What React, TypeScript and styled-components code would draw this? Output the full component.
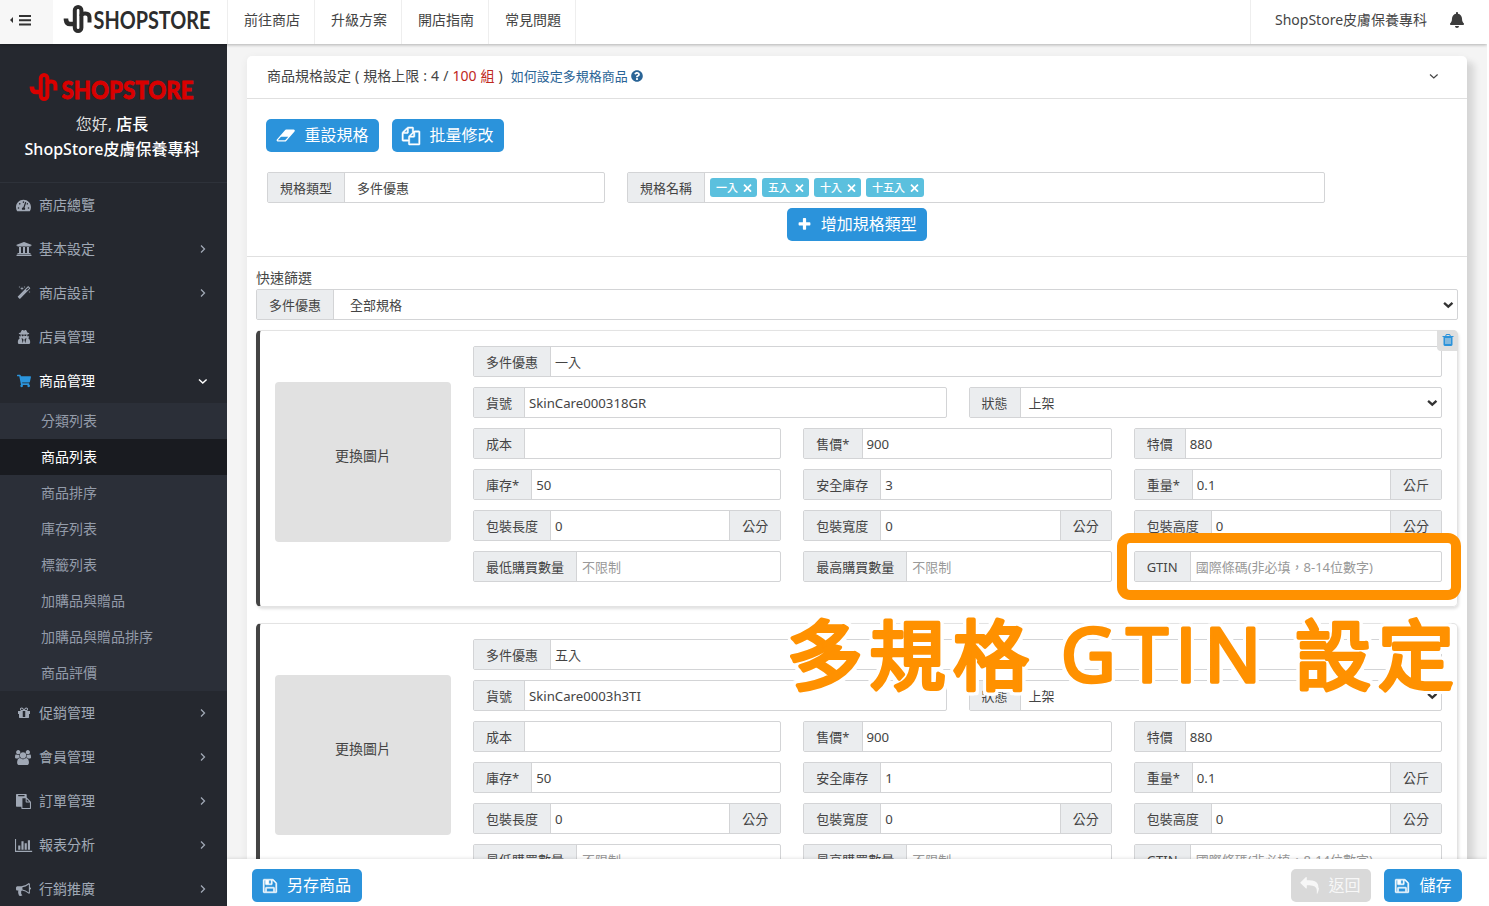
import React from "react";
import styled, { createGlobalStyle, css } from "styled-components";
import {
  FaTachometerAlt,
  FaUniversity,
  FaUserSecret,
  FaShoppingCart,
  FaQuestionCircle,
  FaBell,
} from "react-icons/fa";

const Global = createGlobalStyle`
  * { box-sizing: border-box; }
  html, body { margin: 0; background: #fff; overflow: hidden; }
  body {
    font-family: "Noto Sans", "Noto Sans CJK TC", sans-serif;
    font-size: 14px;
    line-height: 20px;
    color: #444;
  }
`;

/* ---------- glyphs ---------- */

const glyphs = {
  floppy: { w: 1792, bold: 50, d: "M512 1536h768v-384h-768v384zm896 0h128v-896q0-14-10-38.5t-20-34.5l-281-281q-10-10-34-20t-39-10v416q0 40-28 68t-68 28h-576q-40 0-68-28t-28-68v-416h-128v1280h128v-416q0-40 28-68t68-28h832q40 0 68 28t28 68v416zm-384-928v-320q0-13-9.5-22.5t-22.5-9.5h-192q-13 0-22.5 9.5t-9.5 22.5v320q0 13 9.5 22.5t22.5 9.5h192q13 0 22.5-9.5t9.5-22.5zm640 32v928q0 40-28 68t-68 28h-1344q-40 0-68-28t-28-68v-1344q0-40 28-68t68-28h928q40 0 88 20t76 48l280 280q28 28 48 76t20 88z" },
  files: { w: 1792, bold: 50, d: "M1696 384q40 0 68 28t28 68v1216q0 40-28 68t-68 28h-960q-40 0-68-28t-28-68v-288h-544q-40 0-68-28t-28-68v-672q0-40 20-88t48-76l408-408q28-28 76-48t88-20h416q40 0 68 28t28 68v328q68-40 128-40h416zm-544 213l-299 299h299v-299zm-640-384l-299 299h299v-299zm196 647l316-316v-416h-384v416q0 40-28 68t-68 28h-416v640h512v-256q0-40 20-88t48-76zm956 804v-1152h-384v416q0 40-28 68t-68 28h-416v640h896z" },
  paste: { w: 1792, bold: 0, d: "M768 1664h896v-640h-416q-40 0-68-28t-28-68v-416h-384v1152zm256-1440v-64q0-13-9.5-22.5t-22.5-9.5h-704q-13 0-22.5 9.5t-9.5 22.5v64q0 13 9.5 22.5t22.5 9.5h704q13 0 22.5-9.5t9.5-22.5zm256 672h299l-299-299v299zm512 128v672q0 40-28 68t-68 28h-960q-40 0-68-28t-28-68v-160h-544q-40 0-68-28t-28-68v-1344q0-40 28-68t68-28h1088q40 0 68 28t28 68v328q21 13 36 28l408 408q28 28 48 76t20 88z" },
  chart: { w: 2048, bold: 0, d: "M640 896v512h-256v-512h256zm384-512v1024h-256v-1024h256zm1024 1152v128h-2048v-1536h128v1408h1920zm-640-896v768h-256v-768h256zm384-384v1152h-256v-1152h256z" },
  trash: { w: 1792, bold: 0, d: "M704 1376v-704q0-14-9-23t-23-9h-64q-14 0-23 9t-9 23v704q0 14 9 23t23 9h64q14 0 23-9t9-23zm256 0v-704q0-14-9-23t-23-9h-64q-14 0-23 9t-9 23v704q0 14 9 23t23 9h64q14 0 23-9t9-23zm256 0v-704q0-14-9-23t-23-9h-64q-14 0-23 9t-9 23v704q0 14 9 23t23 9h64q14 0 23-9t9-23zm-544-992h448l-48-117q-7-9-17-11h-317q-10 2-17 11zm928 32v64q0 14-9 23t-23 9h-96v948q0 83-47 143.5t-113 60.5h-832q-66 0-113-58.5t-47-141.5v-952h-96q-14 0-23-9t-9-23v-64q0-14 9-23t23-9h309l70-167q15-37 54-63t79-26h320q40 0 79 26t54 63l70 167h309q14 0 23 9t9 23z" },
  eraser: { w: 2048, bold: 0, d: "M960 1408l336-384h-768l-336 384h768zm1013-1077q15 34 9.5 71.5t-30.5 65.5l-896 1024q-38 44-96 44h-768q-38 0-69.5-20.5t-47.5-54.5q-15-34-9.5-71.5t30.5-65.5l896-1024q38-44 96-44h768q38 0 69.5 20.5t47.5 54.5z" },
  reply: { w: 1792, bold: 0, d: "M1792 1120q0 166-127 451-3 7-10.5 24t-13.5 30-13 22q-12 17-28 17-15 0-23.5-10t-8.5-25q0-9 2.5-26.5t2.5-23.5q5-68 5-123 0-112-19.5-200.5t-54-153.5-89-112-117-79-145.5-48.5-165.5-24.5-184.5-7h-224v256q0 26-19 45t-45 19-45-19l-512-512q-19-19-19-45t19-45l512-512q19-19 45-19t45 19 19 45v256h224q713 0 875 403 53 134 53 333z" },
  bullhorn: { w: 1792, bold: 0, d: "M1664 640q53 0 90.5 37.5t37.5 90.5-37.5 90.5-90.5 37.5v384q0 52-38 90t-90 38q-417-347-812-380-58 19-91 66t-31 100.5 40 92.5q-20 33-23 65.5t6 58 33.5 55 48 50 61.5 50.5q-29 58-111.5 83t-168.5 11.5-132-55.5q-7-23-29.5-87.5t-32-94.5-23-89-15-101 3.5-98.5 22-110.5h-122q-66 0-113-47t-47-113v-192q0-66 47-113t113-47h480q435 0 896-384 52 0 90 38t38 90v384zm-128 604v-954q-394 302-768 343v270q377 42 768 341z" },
  magic: { w: 1792, bold: 0, d: "M1254 581l293-293-107-107-293 293zm447-293q0 27-18 45l-1286 1286q-18 18-45 18t-45-18l-198-198q-18-18-18-45t18-45l1286-1286q18-18 45-18t45 18l198 198q18 18 18 45zm-1351-190l98 30-98 30-30 98-30-98-98-30 98-30 30-98zm350 162l196 60-196 60-60 196-60-196-196-60 196-60 60-196zm930 478l98 30-98 30-30 98-30-98-98-30 98-30 30-98zm-640-640l98 30-98 30-30 98-30-98-98-30 98-30 30-98z" },
  gift: { w: 1792, bold: 0, d: "M1056 1356v-716h-320v716q0 25 18 38.5t46 13.5h192q28 0 46-13.5t18-38.5zm-456-844h195l-126-161q-26-31-69-31-40 0-68 28t-28 68 28 68 68 28zm688-96q0-40-28-68t-68-28q-43 0-69 31l-125 161h194q40 0 68-28t28-68zm376 256v320q0 14-9 23t-23 9h-96v416q0 40-28 68t-68 28h-1088q-40 0-68-28t-28-68v-416h-96q-14 0-23-9t-9-23v-320q0-14 9-23t23-9h440q-93 0-158.5-65.5t-65.5-158.5 65.5-158.5 158.5-65.5q107 0 168 77l128 165 128-165q61-77 168-77 93 0 158.5 65.5t65.5 158.5-65.5 158.5-158.5 65.5h440q14 0 23 9t9 23z" },
  users: { w: 1920, bold: 0, d: "M593 896q-162 5-265 128h-134q-82 0-138-40.5t-56-118.5q0-353 124-353 6 0 43.5 21t97.5 42.5 119 21.5q67 0 133-23-5 37-5 66 0 159 81 256zm1071 637q0 120-73 189.5t-194 69.5h-874q-121 0-194-69.5t-73-189.5q0-53 3.5-103.5t14-109 26.5-108.5 43-97.5 62-81 85.5-53.5 111.5-20q10 0 43 21.5t73 48 107 48 135 21.5 135-21.5 107-48 73-48 43-21.5q61 0 111.5 20t85.5 53.5 62 81 43 97.5 26.5 108.5 14 109 3.5 103.5zm-1024-1277q0 106-75 181t-181 75-181-75-75-181 75-181 181-75 181 75 75 181zm704 384q0 159-112.5 271.5t-271.5 112.5-271.5-112.5-112.5-271.5 112.5-271.5 271.5-112.5 271.5 112.5 112.5 271.5zm576 225q0 78-56 118.5t-138 40.5h-134q-103-123-265-128 81-97 81-256 0-29-5-66 66 23 133 23 59 0 119-21.5t97.5-42.5 43.5-21q124 0 124 353zm-128-609q0 106-75 181t-181 75-181-75-75-181 75-181 181-75 181 75 75 181z" },
  plus: { w: 1792, bold: 0, d: "M1600 736v192q0 40-28 68t-68 28h-416v416q0 40-28 68t-68 28h-192q-40 0-68-28t-28-68v-416h-416q-40 0-68-28t-28-68v-192q0-40 28-68t68-28h416v-416q0-40 28-68t68-28h192q40 0 68 28t28 68v416h416q40 0 68 28t28 68z" },
};

function Glyph({ name, size }: { name: keyof typeof glyphs; size: number }) {
  const g = glyphs[name];
  return (
    <svg
      width={(size * g.w) / 1792}
      height={size}
      viewBox={`0 0 ${g.w} 1792`}
      fill="currentColor"
      stroke={g.bold ? "currentColor" : "none"}
      strokeWidth={g.bold}
      overflow="visible"
    >
      <path d={g.d} />
    </svg>
  );
}

const arrowPaths = { right: "M3 1.5 6.5 5 3 8.5", down: "M1 3.5 4.8 7 8.6 3.5" };

function Arrow({ dir, size = 10, weight = 1.2 }: { dir: "right" | "down"; size?: number; weight?: number }) {
  return (
    <svg width={size} height={size} viewBox="0 0 10 10" fill="none" stroke="currentColor" strokeWidth={weight}>
      <path d={arrowPaths[dir]} />
    </svg>
  );
}

function Logo({ width, color, heavy }: { width: number; color: string; heavy?: boolean }) {
  return (
    <svg width={width} height={28} viewBox={`0 0 ${width} 28`} overflow="visible">
      <g fill="none" stroke={color} strokeWidth="4">
        <path d="M2 13.5v1.2q.5 4.3 4 4.3h4.5" strokeWidth="4.6" />
        <rect x="10.8" y="2" width="6.6" height="24" rx="3.3" />
        <path d="M17.5 11q0-2.6 3.4-2.6h.6q4 0 4 4.2v5" />
      </g>
      {heavy ? (
        <text x="31.5" y="25.6" fontFamily="Lato" fontWeight="900" fontSize="25" fill={color} stroke={color} strokeWidth=".8" textLength="132" lengthAdjust="spacingAndGlyphs">
          SHOPSTORE
        </text>
      ) : (
        <text x="29.5" y="24" fontFamily="Lato" fontWeight="700" fontSize="24.5" fill={color} textLength="117" lengthAdjust="spacingAndGlyphs">
          SHOPSTORE
        </text>
      )}
    </svg>
  );
}

/* ---------- shell ---------- */

const Page = styled.div`
  position: relative;
  width: 1487px;
  height: 906px;
  display: flex;
  flex-direction: column;
  overflow: hidden;
  background: #f4f4f4;
`;
const TopBar = styled.header`
  position: relative;
  z-index: 2;
  display: flex;
  flex: 0 0 44px;
  background: #fff;
  box-shadow: 0 1px 3px rgba(0, 0, 0, 0.28);
`;
const MenuToggle = styled.div`
  width: 53px;
  display: flex;
  align-items: center;
  padding: 0 0 4px 10px;
  background: #f7f7f7;
`;
const Brand = styled.div`
  width: 175px;
  padding: 5px 0 0 11px;
  border-right: 1px solid #eee;
`;
const TopLink = styled.div`
  width: 87px;
  padding: 10px 0 0 2px;
  text-align: center;
  border-right: 1px solid #eee;
`;
const Account = styled.div`
  margin-left: auto;
  width: 237px;
  display: flex;
  align-items: flex-start;
  gap: 22px;
  padding: 10px 0 0 24px;
  border-left: 1px solid #eee;
  svg { margin-top: 2px; color: #3c3c3c; }
`;
const Body = styled.div`
  display: flex;
  flex: 1;
  min-height: 0;
`;

/* ---------- side menu ---------- */

const SideBar = styled.aside`
  flex: 0 0 227px;
  background: #25282f;
  color: #a0a8b5;
  overflow: hidden;
`;
const Profile = styled.div`
  height: 139px;
  padding-top: 29px;
  border-bottom: 1px solid #2e323a;
  font-size: 16px;
  line-height: 25px;
  color: #ddd;
  svg { display: block; margin: 0 auto 11px 30px; }
  b { font-weight: 500; color: #fff; }
`;
const Greeting = styled.div`
  padding-right: 3px;
  text-align: center;
`;
const MenuRow = styled.div<{ $active?: boolean }>`
  height: 44px;
  display: flex;
  align-items: center;
  padding: 0 19px 0 15px;
  color: ${(p) => (p.$active ? "#fff" : "#a0a8b5")};
  span { flex: 1; }
`;
const MenuIcon = styled.i<{ $active?: boolean }>`
  width: 17px;
  margin-right: 7px;
  display: flex;
  justify-content: center;
  color: ${(p) => (p.$active ? "#2b95dd" : "inherit")};
`;
const SubMenu = styled.div`
  background: #2b2f38;
`;
const SubRow = styled.div<{ $active?: boolean }>`
  height: 36px;
  padding-left: 41px;
  line-height: 36px;
  color: ${(p) => (p.$active ? "#fff" : "#939ba9")};
  background: ${(p) => (p.$active ? "#191b20" : "transparent")};
`;

/* ---------- content ---------- */

const Main = styled.main`
  flex: 1;
  min-width: 0;
  display: flex;
  flex-direction: column;
`;
const Scroll = styled.div`
  flex: 1;
  min-height: 0;
  overflow: hidden;
  padding: 12px 20px 0;
`;
const Panel = styled.section`
  height: 900px;
  background: #fff;
  border-radius: 5px 5px 0 0;
  box-shadow: 8px 6px 6px rgba(0, 0, 0, 0.1), 0 2px 8px rgba(0, 0, 0, 0.06);
`;
const PanelHead = styled.div`
  height: 43px;
  display: flex;
  align-items: center;
  padding: 0 28px 2px 20px;
  border-bottom: 1px solid #e0e0e0;
  word-spacing: 0.4px;
`;
const Limit = styled.span`
  color: #c0281c;
`;
const HelpLink = styled.a`
  flex: 1;
  display: flex;
  align-items: center;
  gap: 3px;
  margin-left: 8px;
  font-size: 13px;
  color: #2a6496;
`;
const SpecArea = styled.div`
  height: 158px;
  padding: 20px 19px 0;
  border-bottom: 1px solid #e0e0e0;
`;
const ButtonRow = styled.div<{ $center?: boolean }>`
  display: flex;
  gap: ${(p) => (p.$center ? 0 : 13.5)}px;
  justify-content: ${(p) => (p.$center ? "center" : "flex-start")};
`;
const Button = styled.button<{ $muted?: boolean }>`
  height: 33px;
  display: flex;
  align-items: center;
  gap: 9px;
  padding: 0 10.5px 0 10px;
  border: 0;
  border-radius: 5px;
  font: 16px/28px "Noto Sans CJK TC", sans-serif;
  color: ${(p) => (p.$muted ? "#f7f7f7" : "#fff")};
  background: ${(p) => (p.$muted ? "#d9d9d9" : "#2b93db")};
  span { padding-bottom: 3px; }
`;
const SpecRow = styled.div`
  display: flex;
  gap: 22px;
  padding: 20px 0 5px 1px;
`;
const Group = styled.div<{ $w?: number }>`
  height: 31px;
  display: flex;
  flex: ${(p) => (p.$w ? `0 0 ${p.$w}px` : "1 1 0")};
  min-width: 0;
  border: 1px solid #d3d4d6;
  border-radius: 2px;
  background: #fff;
  font-size: 13px;
  line-height: 30px;
  white-space: nowrap;
`;
const cap = css`
  flex: none;
  padding: 0 12px;
  background: #ebedef;
`;
const Label = styled.span`
  ${cap}
  border-right: 1px solid #d3d4d6;
`;
const Unit = styled.span`
  ${cap}
  border-left: 1px solid #d3d4d6;
`;
const Value = styled.span<{ $pad?: number; $hint?: boolean; $latin?: boolean }>`
  flex: 1;
  min-width: 0;
  padding-left: ${(p) => p.$pad ?? 4}px;
  font-size: ${(p) => (p.$latin ? 13.2 : 13)}px;
  color: ${(p) => (p.$hint ? "#999" : "#444")};
  line-height: 31px;
`;
const SelectMark = styled.span`
  display: flex;
  align-items: center;
  padding-right: 3px;
  color: #333;
`;
const Tags = styled.div`
  display: flex;
  gap: 5px;
  padding: 5px;
`;
const Tag = styled.span`
  height: 19px;
  display: flex;
  align-items: center;
  gap: 5px;
  padding: 0 5px 0 6px;
  border-radius: 3px;
  background: #5bc0de;
  color: #fff;
  font-size: 11px;
  font-weight: 500;
  line-height: 18px;
`;
const FilterArea = styled.div`
  padding: 11px 9px 0;
`;
const FilterTitle = styled.div`
  height: 21px;
`;
const Card = styled.div`
  position: relative;
  height: 277px;
  display: flex;
  margin: 10px 0 16px;
  padding: 15px 15px 0;
  gap: 22px;
  border: 1px solid #e3e3e3;
  border-left: 4px solid #444;
  border-radius: 5px;
  box-shadow: 1px 2px 3px rgba(0, 0, 0, 0.12);
`;
const Picture = styled.div`
  flex: 0 0 176px;
  height: 160px;
  margin-top: 36px;
  border-radius: 4px;
  background: #e1e1e1;
  text-align: center;
  line-height: 147px;
`;
const Fields = styled.div`
  flex: 1;
  display: flex;
  flex-direction: column;
  gap: 10px;
`;
const Row = styled.div`
  display: flex;
  gap: 22px;
`;
const TrashButton = styled.div`
  position: absolute;
  top: -1px;
  right: -1px;
  width: 21px;
  height: 21px;
  display: flex;
  align-items: center;
  justify-content: center;
  padding-bottom: 2px;
  border-radius: 0 5px 0 4px;
  background: #dfdfdf;
  color: #2b93db;
`;
const Footer = styled.footer`
  position: relative;
  flex: 0 0 47px;
  display: flex;
  justify-content: space-between;
  padding: 10px 25px 0;
  background: #fff;
  box-shadow: 0 -1px 3px rgba(0, 0, 0, 0.1);
`;

/* ---------- callout on top of the form ---------- */

const Frame = styled.div`
  position: absolute;
  z-index: 3;
  left: 1117px;
  top: 533px;
  width: 344px;
  height: 67px;
  border: 10px solid #ff9100;
  border-radius: 13px;
`;
const Caption = styled.svg`
  position: absolute;
  z-index: 3;
  left: 770px;
  top: 600px;
  overflow: visible;
  fill: #ff9100;
  stroke: #ff9100;
  stroke-linejoin: round;
  filter: drop-shadow(3px 0 #fff) drop-shadow(-3px 0 #fff) drop-shadow(0 3px #fff) drop-shadow(0 -3px #fff);
`;

const upperMenu: [React.ReactNode, string, string][] = [
  [<FaTachometerAlt size={15} />, "商店總覽", ""],
  [<FaUniversity size={16} />, "基本設定", "right"],
  [<Glyph name="magic" size={14} />, "商店設計", "right"],
  [<FaUserSecret size={14} />, "店員管理", ""],
  [<FaShoppingCart size={14} />, "商品管理", "down"],
];
const subMenu = ["分類列表", "商品列表", "商品排序", "庫存列表", "標籤列表", "加購品與贈品", "加購品與贈品排序", "商品評價"];
const lowerMenu: [React.ReactNode, string, string][] = [
  [<Glyph name="gift" size={14} />, "促銷管理", "right"],
  [<Glyph name="users" size={15} />, "會員管理", "right"],
  [<Glyph name="paste" size={15} />, "訂單管理", "right"],
  [<Glyph name="chart" size={15} />, "報表分析", "right"],
  [<Glyph name="bullhorn" size={15} />, "行銷推廣", "right"],
];

function Menu({ items }: { items: [React.ReactNode, string, string][] }) {
  return (
    <>
      {items.map(([icon, text, dir]) => (
        <MenuRow key={text} $active={dir === "down"}>
          <MenuIcon $active={dir === "down"}>{icon}</MenuIcon>
          <span>{text}</span>
          {dir && <Arrow dir={dir as "right" | "down"} weight={dir === "down" ? 1.5 : 1.3} />}
        </MenuRow>
      ))}
    </>
  );
}

interface FieldProps {
  label: string;
  value?: string;
  hint?: string;
  unit?: string;
  select?: boolean;
}
function Field({ label, value, hint, unit, select }: FieldProps) {
  return (
    <Group>
      <Label>{label}</Label>
      <Value $hint={!!hint} $latin={/^[\w.]+$/.test(value ?? "")} $pad={select ? 8 : hint ? 5 : 4}>
        {value ?? hint}
      </Value>
      {unit && <Unit>{unit}</Unit>}
      {select && <SelectMark><Arrow dir="down" size={11} weight={2.1} /></SelectMark>}
    </Group>
  );
}

function SpecCard({ name, sku, safe, removable }: { name: string; sku: string; safe: string; removable?: boolean }) {
  return (
    <Card>
      <Picture>更換圖片</Picture>
      <Fields>
        <Row><Field label="多件優惠" value={name} /></Row>
        <Row>
          <Field label="貨號" value={sku} />
          <Field label="狀態" value="上架" select />
        </Row>
        <Row>
          <Field label="成本" />
          <Field label="售價*" value="900" />
          <Field label="特價" value="880" />
        </Row>
        <Row>
          <Field label="庫存*" value="50" />
          <Field label="安全庫存" value={safe} />
          <Field label="重量*" value="0.1" unit="公斤" />
        </Row>
        <Row>
          <Field label="包裝長度" value="0" unit="公分" />
          <Field label="包裝寬度" value="0" unit="公分" />
          <Field label="包裝高度" value="0" unit="公分" />
        </Row>
        <Row>
          <Field label="最低購買數量" hint="不限制" />
          <Field label="最高購買數量" hint="不限制" />
          <Field label="GTIN" hint="國際條碼(非必填，8-14位數字)" />
        </Row>
      </Fields>
      {removable && <TrashButton><Glyph name="trash" size={14} /></TrashButton>}
    </Card>
  );
}

export default function App() {
  return (
    <>
      <Global />
      <Page>
        <TopBar>
          <MenuToggle>
            <svg width="22" height="12" viewBox="0 0 22 12" fill="#333">
              <path d="M3 3v6L0 6zM9 1h12v2H9zM9 5.2h12v2H9zM9 9.4h12v2H9z" />
            </svg>
          </MenuToggle>
          <Brand><Logo width={147} color="#2d2d2d" /></Brand>
          {["前往商店", "升級方案", "開店指南", "常見問題"].map((t) => <TopLink key={t}>{t}</TopLink>)}
          <Account>
            <span>ShopStore皮膚保養專科</span>
            <FaBell size={16} />
          </Account>
        </TopBar>
        <Body>
          <SideBar>
            <Profile>
              <Logo width={164} color="#d90000" heavy />
              <Greeting>您好, <b>店長</b></Greeting>
              <Greeting><b>ShopStore皮膚保養專科</b></Greeting>
            </Profile>
            <Menu items={upperMenu} />
            <SubMenu>
              {subMenu.map((t, i) => <SubRow key={t} $active={i === 1}>{t}</SubRow>)}
            </SubMenu>
            <Menu items={lowerMenu} />
          </SideBar>
          <Main>
            <Scroll>
              <Panel>
                <PanelHead>
                  <span>商品規格設定 ( 規格上限 : 4 / <Limit>100 組</Limit> )</span>
                  <HelpLink>如何設定多規格商品 <FaQuestionCircle size={12} /></HelpLink>
                  <Arrow dir="down" />
                </PanelHead>
                <SpecArea>
                  <ButtonRow>
                    <Button><Glyph name="eraser" size={17} /><span>重設規格</span></Button>
                    <Button><Glyph name="files" size={18} /><span>批量修改</span></Button>
                  </ButtonRow>
                  <SpecRow>
                    <Group $w={338}>
                      <Label>規格類型</Label>
                      <Value $pad={12}>多件優惠</Value>
                    </Group>
                    <Group $w={698}>
                      <Label>規格名稱</Label>
                      <Tags>
                        {["一入", "五入", "十入", "十五入"].map((t) => (
                          <Tag key={t}>
                            {t}
                            <svg width="9" height="9" viewBox="0 0 9 9" stroke="#fff" strokeWidth="1.7"><path d="M1 1.7l7 7M8 1.7l-7 7" /></svg>
                          </Tag>
                        ))}
                      </Tags>
                    </Group>
                  </SpecRow>
                  <ButtonRow $center>
                    <Button><Glyph name="plus" size={15} /><span>增加規格類型</span></Button>
                  </ButtonRow>
                </SpecArea>
                <FilterArea>
                  <FilterTitle>快速篩選</FilterTitle>
                  <Row>
                    <Group>
                      <Label>多件優惠</Label>
                      <Value $pad={16}>全部規格</Value>
                      <SelectMark><Arrow dir="down" size={11} weight={2.1} /></SelectMark>
                    </Group>
                  </Row>
                  <SpecCard name="一入" sku="SkinCare000318GR" safe="3" removable />
                  <SpecCard name="五入" sku="SkinCare0003h3TI" safe="1" />
                </FilterArea>
              </Panel>
            </Scroll>
            <Footer>
              <Button><Glyph name="floppy" size={16} /><span>另存商品</span></Button>
              <ButtonRow>
                <Button $muted><Glyph name="reply" size={18} /><span>返回</span></Button>
                <Button><Glyph name="floppy" size={16} /><span>儲存</span></Button>
              </ButtonRow>
            </Footer>
          </Main>
        </Body>
        <Frame />
        <Caption width="717" height="110" viewBox="0 0 717 110">
          <g fontFamily="Noto Sans CJK TC" fontSize="76" strokeWidth="4">
            <text x="17 99.5 183" y="83.5">多規格</text>
            <text x="525 608" y="83.5">設定</text>
          </g>
          <text fontFamily="Open Sans" fontSize="75" strokeWidth="3.6" x="291 356.5 405.5 434.5" y="82">GTIN</text>
        </Caption>
      </Page>
    </>
  );
}
